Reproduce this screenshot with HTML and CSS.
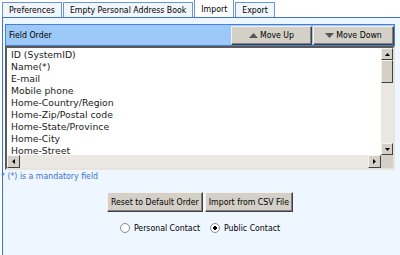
FILE: index.html
```html
<!DOCTYPE html>
<html lang="en">
<head>
    <meta charset="UTF-8">
    <meta name="viewport" content="width=device-width, initial-scale=1.0">
    <title>Import</title>
    <link rel="stylesheet" href="styles.css">
</head>
<body>
    <div class="tabs">
        <div class="tab">Preferences</div>
        <div class="tab">Empty Personal Address Book</div>
        <div class="tab active">Import</div>
        <div class="tab">Export</div>
    </div>

    <div class="panel">
        <div class="order-head">
            <span class="head-title">Field Order</span>
            <div class="head-buttons">
                <button class="btn move-btn">
                    <svg width="9" height="5" viewBox="0 0 9 5"><path d="M4.5 0 L9 5 L0 5 Z" fill="#555"/></svg>
                    Move Up
                </button>
                <button class="btn move-btn">
                    <svg width="9" height="5" viewBox="0 0 9 5"><path d="M0 0 L9 0 L4.5 5 Z" fill="#555"/></svg>
                    Move Down
                </button>
            </div>
        </div>

        <div class="listbox">
            <ul class="fields">
                <li>ID (SystemID)</li>
                <li>Name(*)</li>
                <li>E-mail</li>
                <li>Mobile phone</li>
                <li>Home-Country/Region</li>
                <li>Home-Zip/Postal code</li>
                <li>Home-State/Province</li>
                <li>Home-City</li>
                <li>Home-Street</li>
            </ul>
            <div class="vscroll">
                <span class="sb-btn"><svg width="5" height="3" viewBox="0 0 5 3"><path d="M2.5 0 L5 3 L0 3 Z" fill="#000"/></svg></span>
                <span class="sb-thumb"></span>
                <span class="sb-track"></span>
                <span class="sb-btn"><svg width="5" height="3" viewBox="0 0 5 3"><path d="M0 0 L5 0 L2.5 3 Z" fill="#000"/></svg></span>
            </div>
            <div class="hscroll">
                <span class="sb-btn"><svg width="3" height="5" viewBox="0 0 3 5"><path d="M3 0 L3 5 L0 2.5 Z" fill="#000"/></svg></span>
                <span class="sb-track"></span>
                <span class="sb-btn"><svg width="3" height="5" viewBox="0 0 3 5"><path d="M0 0 L3 2.5 L0 5 Z" fill="#000"/></svg></span>
            </div>
            <div class="corner"></div>
        </div>

        <p class="note">* (*) is a mandatory field</p>

        <div class="actions">
            <button class="btn action-btn">Reset to Default Order</button>
            <button class="btn action-btn">Import from CSV File</button>
        </div>

        <div class="contact-type">
            <label><input type="radio" name="ctype"> Personal Contact</label>
            <label><input type="radio" name="ctype" checked> Public Contact</label>
        </div>
    </div>
</body>
</html>
```

FILE: styles.css
```css
body {
    margin: 0;
    width: 400px;
    height: 255px;
    overflow: hidden;
    background: #fff;
    font-family: "DejaVu Sans Condensed", "Liberation Sans", sans-serif;
    font-size: 8.7px;
    color: #000;
}
.tabs {
    display: flex;
    align-items: flex-end;
    gap: 1px;
    height: 17px;
    padding-left: 2px;
}
.tab {
    height: 14px;
    line-height: 14px;
    padding: 0 6px;
    border: 1px solid #6b95d8;
    border-bottom: none;
    background: #f1f5fc;
    white-space: nowrap;
}
.tab.active {
    height: 17px;
    line-height: 18px;
    background: #fff;
}
.panel {
    margin-left: 2px;
    height: 240px;
    border-top: 1px solid #3f73d2;
    border-left: 1px solid #3f73d2;
    background: #eef6ff;
    padding: 6px 5px 0 2px;
}
.order-head {
    display: flex;
    align-items: center;
    justify-content: space-between;
    height: 20px;
    padding-left: 3px;
    border: 1px solid #4a7fd8;
    background: #9cc9f7;
}
.btn {
    font-family: inherit;
    font-size: 8.7px;
    color: #000;
    background: #d4d0c8;
    border: 1px solid;
    border-color: #f4f3ee #404040 #404040 #f4f3ee;
    box-shadow: inset -1px -1px 0 #808080;
    padding: 0;
    display: inline-flex;
    align-items: center;
    justify-content: center;
    gap: 2px;
}
.head-buttons {
    display: flex;
    gap: 1px;
}
.move-btn {
    width: 81px;
    height: 19px;
}
.listbox {
    display: grid;
    grid-template-columns: 1fr 12px;
    grid-template-rows: 107px 13px;
    border: 2px solid;
    border-color: #5a5a5a #e6e4dc #e6e4dc #5a5a5a;
    background: #fff;
}
.fields {
    list-style: none;
    margin: 0;
    padding: 1px 0 0 4px;
    overflow: hidden;
    font-family: "DejaVu Sans", "Liberation Sans", sans-serif;
    font-size: 9.3px;
    line-height: 12px;
    color: #222;
}
.vscroll {
    display: flex;
    flex-direction: column;
    background: #e9e8e3;
}
.hscroll {
    display: flex;
    background: #e9e8e3;
}
.sb-btn {
    flex: 0 0 12px;
    width: 12px;
    height: 12px;
    box-sizing: border-box;
    display: flex;
    align-items: center;
    justify-content: center;
    background: #d4d0c8;
    border: 1px solid;
    border-color: #f4f3ee #404040 #404040 #f4f3ee;
}
.hscroll .sb-btn {
    height: 13px;
    width: 13px;
    flex-basis: 13px;
}
.sb-thumb {
    flex: 0 0 23px;
    box-sizing: border-box;
    background: #d4d0c8;
    border: 1px solid;
    border-color: #f4f3ee #404040 #404040 #f4f3ee;
}
.sb-track {
    flex: 1;
}
.corner {
    background: #d4d0c8;
}
.note {
    margin: 0 0 0 -4px;
    line-height: 12px;
    color: #3b6fd6;
    white-space: nowrap;
}
.actions {
    display: flex;
    justify-content: center;
    gap: 2px;
    margin-top: 10px;
}
.action-btn {
    height: 20px;
    padding: 0 3px;
}
.contact-type {
    display: flex;
    justify-content: center;
    gap: 10px;
    margin-top: 11px;
}
.contact-type label {
    display: flex;
    align-items: center;
    gap: 4px;
}
.contact-type input {
    appearance: none;
    margin: 0;
    width: 10px;
    height: 10px;
    border-radius: 50%;
    border: 1px solid #8c8c8c;
    background: #fff;
}
.contact-type input:checked {
    background: radial-gradient(circle, #000 0 1.6px, #fff 2px);
}
```
